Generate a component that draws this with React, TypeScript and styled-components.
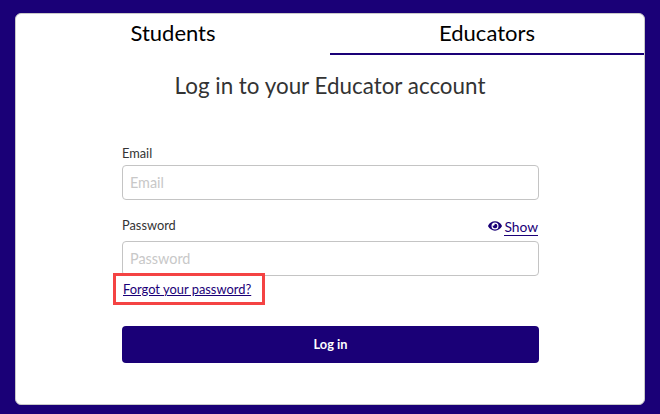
import * as React from "react";
import styled, { createGlobalStyle } from "styled-components";
import { FaEye } from "react-icons/fa";

const indigo = "#1a0077";

const GlobalStyle = createGlobalStyle`
  html, body {
    margin: 0;
    padding: 0;
    height: 100%;
    background: ${indigo};
    font-family: Lato, "Liberation Sans", sans-serif;
  }
`;

const Page = styled.div`
  width: 660px;
  height: 414px;
  padding: 13px 15px 9px;
  box-sizing: border-box;
  overflow: hidden;
`;

const Card = styled.main`
  height: 392px;
  box-sizing: border-box;
  background: #fff;
  border: 1px solid #c9c9c9;
  border-radius: 6px;
  display: flex;
  flex-direction: column;
`;

const Tabs = styled.div`
  display: flex;
`;

const Tab = styled.div<{ $active?: boolean }>`
  flex: 1;
  height: 41px;
  box-sizing: border-box;
  padding-top: 4px;
  text-align: center;
  font-size: 22px;
  line-height: 30px;
  color: #000;
  border-bottom: 2px solid ${(p) => (p.$active ? indigo : "transparent")};
`;

const Title = styled.h1`
  margin: 15px 0 0;
  text-align: center;
  font-size: 22.4px;
  line-height: 32px;
  font-weight: 400;
  color: #333;
`;

const Form = styled.form`
  width: 417px;
  margin: 43px 0 0 106px;
  display: flex;
  flex-direction: column;
`;

const LabelRow = styled.div`
  display: flex;
  justify-content: space-between;
  align-items: flex-end;
  height: 16px;
`;

const Label = styled.label`
  font-size: 12.8px;
  line-height: 16px;
  color: #333;
`;

const Input = styled.input<{ $gap?: number }>`
  display: block;
  width: 100%;
  height: 35px;
  box-sizing: border-box;
  margin-top: ${(p) => p.$gap ?? 4}px;
  padding: 0 7px;
  border: 1px solid #c4c4c4;
  border-radius: 4px;
  background: #fff;
  font-family: inherit;
  font-size: 14.4px;
  &::placeholder {
    color: #c8c8c8;
    opacity: 1;
  }
`;

const PasswordBlock = styled.div`
  margin-top: 17px;
`;

const ShowToggle = styled.span`
  display: flex;
  align-items: center;
  gap: 2px;
  position: relative;
  top: 3px;
  left: -1px;
  font-size: 13.8px;
  line-height: 16px;
  color: ${indigo};
  svg {
    width: 14px;
    height: 14px;
    position: relative;
    top: -2px;
  }
`;

const ShowText = styled.span`
  border-bottom: 1px solid ${indigo};
`;

const ForgotRow = styled.div`
  position: relative;
  margin: 2px 0 0 1px;
  height: 16px;
`;

const Forgot = styled.a`
  font-size: 12.9px;
  line-height: 16px;
  color: ${indigo};
  text-decoration: underline;
`;

/* red annotation drawn over the page */
const Highlight = styled.div`
  position: absolute;
  left: -10px;
  top: -5px;
  width: 152px;
  height: 32px;
  box-sizing: border-box;
  border: 3px solid #f44343;
`;

const Submit = styled.button`
  height: 37px;
  margin-top: 32px;
  padding: 0 0 2px;
  border: 0;
  border-radius: 4px;
  background: ${indigo};
  color: #fff;
  font-family: inherit;
  font-size: 12.8px;
  font-weight: 700;
`;

export default function App() {
  return (
    <Page>
      <GlobalStyle />
      <Card>
        <Tabs>
          <Tab>Students</Tab>
          <Tab $active>Educators</Tab>
        </Tabs>
        <Title>Log in to your Educator account</Title>
        <Form>
          <LabelRow>
            <Label>Email</Label>
          </LabelRow>
          <Input placeholder="Email" />
          <PasswordBlock>
            <LabelRow>
              <Label>Password</Label>
              <ShowToggle>
                <FaEye />
                <ShowText>Show</ShowText>
              </ShowToggle>
            </LabelRow>
            <Input $gap={8} placeholder="Password" />
          </PasswordBlock>
          <ForgotRow>
            <Forgot>Forgot your password?</Forgot>
            <Highlight />
          </ForgotRow>
          <Submit type="button">Log in</Submit>
        </Form>
      </Card>
    </Page>
  );
}
